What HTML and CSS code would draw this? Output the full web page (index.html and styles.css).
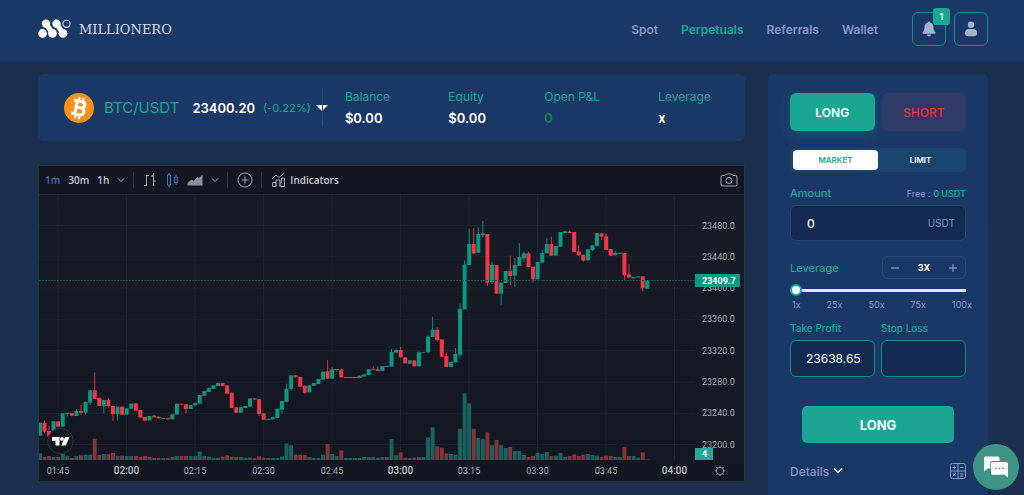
FILE: index.html
```html
<!DOCTYPE html>
<html lang="en">
<head>
<meta charset="utf-8">
<meta name="viewport" content="width=device-width, initial-scale=1">
<title>Millionero</title>
<link rel="stylesheet" href="styles.css">
</head>
<body>
<header class="header">
  <a class="brand" href="#">
    <svg class="brand-mark" viewBox="0 0 33 20" aria-hidden="true">
      <g fill="#fff"><circle cx="4.500" cy="14.500" r="4.400"/><circle cx="8" cy="4.800" r="4.200"/><circle cx="14.500" cy="14.300" r="4.400"/><circle cx="18.500" cy="4.800" r="4.200"/><circle cx="25" cy="14.300" r="4.400"/></g>
      <path d="M8.500 5.500l5.500 8M19 5.500l5.500 8" stroke="#fff" stroke-width="5"/>
      <circle cx="28.500" cy="4.800" r="3.600" fill="none" stroke="#c9d6e8" stroke-width="1.100"/>
    </svg>
    <span>MILLIONERO</span>
  </a>
  <nav class="nav">
    <a href="#">Spot</a><a class="current" href="#">Perpetuals</a><a href="#">Referrals</a><a href="#">Wallet</a>
  </nav>
  <div class="header-actions">
    <button class="icon-button" aria-label="Notifications">
      <svg viewBox="0 0 14 16" width="14" height="16"><path d="M7 .5c-.8 0-1.100.5-1.100 1.100C3.500 2.200 2.600 4 2.600 6c0 3-.8 4.200-1.900 5.200-.6.700-.2 1.500.6 1.500h11.400c.8 0 1.200-.8.6-1.500C12.200 10.200 11.400 9 11.400 6c0-2-.9-3.800-3.300-4.400C8.100 1 7.800.5 7 .5zM5 13.500a2 2 0 0 0 4 0z" fill="#a3b3cf"/></svg>
      <span class="badge">1</span>
    </button>
    <button class="icon-button" aria-label="Account">
      <svg viewBox="0 0 14 16" width="14" height="16"><circle cx="7" cy="3.800" r="3.200" fill="#a3b3cf"/><path d="M4.500 8h5c2 0 3.500 1.600 3.500 4 0 2.200-1 3.300-3 3.300H4c-2 0-3-1.100-3-3.300 0-2.400 1.500-4 3.500-4z" fill="#a3b3cf"/></svg>
    </button>
  </div>
</header>

<main class="main">
  <section class="market">
    <div class="ticker">
      <button class="pair">
        <svg class="coin" viewBox="0 0 30 30" aria-hidden="true">
          <circle cx="15" cy="15" r="15" fill="#f6921a"/>
          <g transform="rotate(13 15 15)" fill="none" stroke="#fff" stroke-width="3">
            <path d="M8.500 8.300H16.500c4.600 0 4.600 6.200 0 6.200h-4M16.500 14.500c5.600 0 5.600 7.200 0 7.200H8.500M12 8.300v13.400"/>
            <path d="M13.300 4.200v4M17.300 4.200v4M13.300 21.700v4M17.300 21.700v4" stroke-width="2.200"/>
          </g>
        </svg>
        <span class="pair-name">BTC/USDT</span>
        <span class="pair-price">23400.20</span>
        <span class="pair-change">(-0.22%)</span>
        <span class="pair-caret"></span>
      </button>
      <dl class="stats">
        <div><dt>Balance</dt><dd>$0.00</dd></div>
        <div><dt>Equity</dt><dd>$0.00</dd></div>
        <div><dt>Open P&amp;L</dt><dd class="flat">0</dd></div>
        <div><dt>Leverage</dt><dd>x</dd></div>
      </dl>
    </div>

    <div class="chart">
      <div class="toolbar">
        <div class="tools">
          <button class="tool-active">1m</button><button>30m</button><button>1h</button>
          <button aria-label="More intervals"><svg viewBox="0 0 8 8" width="8" height="8"><path d="M1 2.500l3 3 3-3"/></svg></button>
        </div>
        <div class="tools">
          <button aria-label="Bars"><svg viewBox="0 0 14 16" width="14" height="16"><path d="M3.500 3v11M1 13.500h2.500M3.500 3.500H6M10.500 1v13M8 4h2.500M10.500 9H13"/></svg></button>
          <button class="tool-active" aria-label="Candles"><svg viewBox="0 0 14 16" width="14" height="16"><path d="M2.500 3h3v10h-3zM4 1v2M4 13v2.500M9.500 5h3v5.500h-3zM11 2.500V5M11 10.500V13"/></svg></button>
          <button aria-label="Area"><svg viewBox="0 0 16 14" width="16" height="14"><path class="solid" d="M.5 12.500V10l4-3.500 2 1.500 4-4 1.500 1 3.500-3.500v11z"/></svg></button>
          <button aria-label="More styles"><svg viewBox="0 0 8 8" width="8" height="8"><path d="M1 2.500l3 3 3-3"/></svg></button>
        </div>
        <div class="tools">
          <button aria-label="Compare"><svg viewBox="0 0 16 16" width="16" height="16"><circle cx="8" cy="8" r="7"/><path d="M4.500 8h7M8 4.500v7"/></svg></button>
        </div>
        <div class="tools">
          <button class="indicators"><svg viewBox="0 0 15 16" width="15" height="16"><path d="M1 7l4-4 3 2.500L13.500 1M1.500 14.500v-4H5v4zM5 14.500V8h4v6.500M9 14.500v-4h1.500V6H13.500v8.500z"/></svg>Indicators</button>
        </div>
        <button class="camera" aria-label="Snapshot"><svg viewBox="0 0 18 14" width="18" height="14"><path d="M2.500 2.500H5L6.500 1h5L13 2.500h2.500a1.500 1.500 0 0 1 1.500 1.500v7.500a1.500 1.500 0 0 1-1.500 1.500h-13A1.500 1.500 0 0 1 1 11.500V4a1.500 1.500 0 0 1 1.500-1.500z"/><circle cx="9" cy="7.500" r="3"/></svg></button>
      </div>
      <svg class="plot" id="plot" viewBox="0 0 705 286" role="img" aria-label="BTC/USDT one minute candles"></svg>
    </div>
  </section>

  <form class="order" onsubmit="return false">
    <div class="sides">
      <button type="button" class="side side-long">LONG</button>
      <button type="button" class="side side-short">SHORT</button>
    </div>
    <div class="types">
      <button type="button" class="type-active">MARKET</button>
      <button type="button">LIMIT</button>
    </div>
    <div class="row amount-row"><label for="amount">Amount</label><span class="free">Free : <b>0 USDT</b></span></div>
    <div class="amount"><input id="amount" value="0"><span>USDT</span></div>
    <div class="row leverage-row">
      <label for="leverage">Leverage</label>
      <div class="stepper">
        <button type="button" aria-label="Less"><svg viewBox="0 0 10 10" width="10" height="10"><path d="M1 5h8"/></svg></button>
        <output>3X</output>
        <button type="button" aria-label="More"><svg viewBox="0 0 10 10" width="10" height="10"><path d="M1 5h8M5 1v8"/></svg></button>
      </div>
    </div>
    <input class="slider" id="leverage" type="range" min="1" max="100" value="1">
    <div class="marks"><span>1x</span><span>25x</span><span>50x</span><span>75x</span><span>100x</span></div>
    <div class="exits">
      <div><label for="profit">Take Profit</label><input id="profit" value="23638.65"></div>
      <div><label for="loss">Stop Loss</label><input id="loss"></div>
    </div>
    <button class="submit">LONG</button>
    <div class="row details-row">
      <button type="button" class="details">Details <svg viewBox="0 0 10 8" width="10" height="8"><path d="M1 1.500l4 4 4-4"/></svg></button>
      <button type="button" class="calculator" aria-label="Calculator"><svg viewBox="0 0 16 16" width="16" height="16"><rect x=".5" y=".5" width="15" height="15" rx="2"/><path d="M8 .5v15M.5 8h15M2.500 4.500h3.500M4.250 2.700v3.600M10 4.500h3.500M3 10.500l2.600 2.600M5.600 10.500L3 13.100M10 10.800h3.500M10 13h3.500"/></svg></button>
    </div>
  </form>
</main>

<button class="chat" aria-label="Chat">
  <svg viewBox="0 0 26 22" width="26" height="22"><path d="M2.500.5h12.200c1 0 1.800.8 1.800 1.800V5H9.300C8 5 7.200 6 7.200 7.200v5.300H4.500L1 15.500V2.300C1 1.300 1.500.5 2.500.5z" fill="#fff"/><path d="M9.800 6h13.400c1 0 1.800.8 1.800 1.800v13.700l-3.500-2.700H9.800c-1 0-1.800-.8-1.800-1.800V7.800C8 6.800 8.800 6 9.800 6z" fill="#fff"/><g fill="#3e9586"><circle cx="13" cy="12.300" r=".9"/><circle cx="16.500" cy="12.300" r=".9"/><circle cx="20" cy="12.300" r=".9"/></g></svg>
</button>
<script src="chart.js"></script>
</body>
</html>
```

FILE: styles.css
```css
* { box-sizing: border-box; }

body {
  margin: 0;
  min-height: 100vh;
  display: flex;
  flex-direction: column;
  background: linear-gradient(#1b2f4c, #1b3050);
  color: #fff;
  font-family: Inter, "Open Sans", sans-serif;
  font-size: 11px;
}

button, input { font: inherit; color: inherit; }
button { border: 0; padding: 0; background: none; cursor: pointer; }
svg { display: block; }
a { text-decoration: none; }

.header {
  display: flex;
  align-items: center;
  height: 62px;
  padding: 0 36px 4px 38px;
  background: #1a3866;
}
.brand {
  display: flex;
  align-items: center;
  gap: 8px;
  margin-right: auto;
  color: #d5dfec;
  font-family: "DejaVu Serif", serif;
  font-size: 13px;
}
.brand-mark { width: 33px; height: 20px; }
.nav { display: flex; gap: 23px; font-size: 12px; font-weight: 600; }
.nav a { color: #8399c2; }
.nav .current { color: #1ba593; }
.header-actions { display: flex; gap: 8px; margin-left: 34px; }
.icon-button {
  position: relative;
  display: grid;
  place-items: center;
  width: 34px;
  height: 34px;
  border: 1px solid #178985;
  border-radius: 6px;
}
.badge {
  position: absolute;
  top: -5px;
  right: -5px;
  width: 17px;
  height: 17px;
  border-radius: 3px;
  background: #1ba593;
  font-size: 9px;
  font-weight: 600;
  line-height: 17px;
}

.main {
  flex: 1;
  display: grid;
  grid-template-columns: minmax(0, 1fr) 220px;
  gap: 23px;
  padding: 12px 36px 0 38px;
}
.market { display: flex; flex-direction: column; gap: 24px; }

.ticker {
  display: flex;
  align-items: center;
  height: 67px;
  padding: 0 34px 0 26px;
  border-radius: 6px;
  background: #1a3866;
}
.pair { display: flex; align-items: center; }
.coin { width: 30px; height: 30px; }
.pair-name { margin-left: 10px; color: #1ba593; font-size: 15px; }
.pair-price { margin-left: 13px; font-size: 13px; font-weight: 600; }
.pair-change { margin-left: 8px; color: #1a9b8d; font-size: 11px; font-weight: 500; }
.pair-caret {
  margin-left: 5px;
  border: 6px solid transparent;
  border-top-color: #fff;
  border-bottom: 0;
}
.stats {
  flex: 1;
  display: flex;
  justify-content: space-between;
  margin: 0 0 0 -6px;
  padding-left: 22px;
  border-left: 1px solid #2c4b7a;
}
.stats dt { color: #1ba593; font-size: 12px; line-height: 17px; }
.stats dd { margin: 5px 0 0; font-size: 13px; font-weight: 600; line-height: 17px; }
.stats .flat { color: #0b8058; }

.chart { border: 1px solid #2a3140; background: linear-gradient(#181c27, #131722); }
.toolbar {
  display: flex;
  align-items: center;
  height: 29px;
  padding: 0 6px;
  border-bottom: 1px solid #252a35;
  background: #131722;
  color: #c5c8d1;
  font-family: "Open Sans", "Noto Sans", sans-serif;
  font-size: 10px;
  font-weight: 600;
}
.toolbar svg { fill: none; stroke: #a4a8b4; stroke-width: 1; }
.toolbar .solid { fill: #8b8f9a; stroke: none; }
.tools { display: flex; align-items: center; gap: 8px; padding-right: 8px; }
.tools + .tools { padding-left: 9px; border-left: 1px solid #343844; height: 16px; }
.toolbar .tool-active { color: #416cad; }
.toolbar .tool-active svg { stroke: #3a72c8; }
.indicators { display: flex; align-items: center; gap: 4px; }
.camera { margin-left: auto; }
.plot { width: 100%; height: auto; font-family: Roboto, sans-serif; font-size: 9px; }
.grid { stroke: #20242f; }
.axis-label { fill: #a5a8b1; }
.axis-major { fill: #bfc1c8; font-size: 10px; font-weight: 500; }
.up { fill: #089981; stroke: #089981; }
.down { fill: #f23645; stroke: #f23645; }
.volume-up { fill: #1a625d; }
.volume-down { fill: #85333b; }
.last-line { stroke: #135750; stroke-dasharray: 2 1; }
.tag { fill: #089981; }
.volume-tag { fill: #24a69a; }
.tag-text { fill: #fff; font-weight: 700; }
.watermark { fill: #131722; stroke: #303440; }
.watermark-shape { fill: #fff; }
.gear { fill: none; stroke: #8d9099; }

.order {
  display: flex;
  flex-direction: column;
  padding: 19px 22px 14px;
  border-radius: 6px 6px 0 0;
  background: #1a3866;
}
.sides { display: grid; grid-template-columns: 1fr 1fr; gap: 7px; }
.side { height: 38px; border-radius: 6px; font-size: 12px; font-weight: 600; }
.side-long { background: #1ba593; box-shadow: 0 4px 12px #1ba59340; }
.side-short { background: #303a66; color: #d43b41; font-weight: 500; }
.types {
  display: grid;
  grid-template-columns: 1fr 1fr;
  margin-top: 17px;
  padding: 2px 3px;
  border-radius: 6px;
  background: #1a456c;
  font-size: 8px;
  font-weight: 600;
}
.types button { height: 20px; border-radius: 4px; }
.types .type-active { background: #fff; color: #1ba593; }
.row { display: flex; align-items: center; justify-content: space-between; }
.row label { color: #1ba593; font-size: 11px; font-weight: 500; }
.amount-row { height: 18px; margin-top: 12px; }
.free { color: #8399c2; font-size: 9px; }
.free b { color: #1ba593; font-weight: 600; }
.amount {
  display: flex;
  align-items: center;
  height: 36px;
  margin-top: 3px;
  padding: 0 10px 0 16px;
  border: 1px solid #28456f;
  border-radius: 6px;
  background: #132b50;
  color: #7d93bd;
  font-size: 10px;
}
.amount input {
  flex: 1;
  min-width: 0;
  padding: 0;
  border: 0;
  background: none;
  color: #fff;
  font-size: 12px;
  font-weight: 500;
}
.leverage-row { margin-top: 15px; }
.stepper {
  display: flex;
  align-items: center;
  justify-content: space-between;
  width: 84px;
  height: 23px;
  padding: 0 7px;
  border: 1px solid #2d4a78;
  border-radius: 6px;
  font-size: 9px;
  font-weight: 700;
}
.stepper svg { stroke: #9cadce; stroke-width: 1; }
.slider {
  appearance: none;
  width: 100%;
  height: 12px;
  margin: 5px 0 0;
  background: linear-gradient(#dfe5ef, #dfe5ef) center / 100% 3px no-repeat;
}
.slider::-webkit-slider-thumb {
  appearance: none;
  width: 12px;
  height: 12px;
  border: 2px solid #1ba593;
  border-radius: 50%;
  background: #fff;
}
.marks {
  display: flex;
  justify-content: space-between;
  margin: 3px -6px 0 2px;
  color: #8399c2;
  font-size: 9px;
  line-height: 12px;
}
.exits { display: grid; grid-template-columns: 1fr 1fr; gap: 6px; margin-top: 9px; }
.exits label { display: block; color: #1ba593; font-size: 10px; font-weight: 500; line-height: 16px; }
.exits input {
  width: 100%;
  height: 37px;
  margin-top: 4px;
  padding: 0 8px 0 15px;
  border: 1px solid #178985;
  border-radius: 6px;
  background: #132b50;
  font-size: 12px;
}
.submit {
  height: 37px;
  margin: 29px 12px 0;
  border-radius: 5px;
  background: #1ba593;
  font-size: 13px;
  font-weight: 700;
}
.details-row { margin-top: 20px; }
.details { display: flex; align-items: center; gap: 4px; color: #8399c2; font-size: 12px; font-weight: 500; }
.details svg { fill: none; stroke: #fff; stroke-width: 1.5; }
.calculator svg { fill: none; stroke: #8399c2; }
.chat {
  position: fixed;
  right: 5px;
  bottom: 5px;
  display: grid;
  place-items: center;
  width: 46px;
  height: 46px;
  border-radius: 50%;
  background: #3e9586;
}
```

FILE: chart.js
```js
// Each candle: direction, high, body top, body bottom, low, volume top.
// Units are thirds of a plot unit, counted from the segment's offset.
const segments = [
  { offset: 435, candles: `
U 248 248 287 287 340|D 242 248 275 280 351|D 257 273 290 296 348|U 244 244 290 290 351|D 244 244 260 260 351
U 220 220 260 260 342|U 219 219 222 230 348|D 219 219 227 229 354|U 208 213 228 228 348|D 195 213 218 224 346
U 184 186 218 224 344|U 151 151 188 195 344|D 97 151 177 177 296|D 172 174 198 198 345|U 180 180 198 220 342
D 175 180 198 203 343|D 198 198 222 243 339|U 200 200 222 242 348|D 200 200 224 224 347|U 205 205 224 224 348
U 191 191 206 206 348|D 190 190 212 212 348|D 210 210 233 233 351|D 231 231 242 242 348|U 228 228 241 241 351
D 225 227 232 232 354|D 230 230 235 235 354|U 234 234 237 237 354|D 234 234 238 238 354|U 223 223 238 238 351
U 191 191 224 224 348|D 191 191 194 194 348|D 193 193 207 220 348|U 195 195 207 207 348|U 189 189 196 196 348
U 165 165 191 191 335|U 153 153 167 167 348|U 142 145 156 156 350|U 136 136 147 147 353|U 129 129 138 138 353
D 129 129 138 138 350|D 136 136 161 161 346|D 158 158 204 204 350|D 202 202 218 218 351|U 202 202 218 218 351
U 198 198 204 204 353|U 175 175 200 200 353|D 175 175 179 179 354|D 178 178 222 227 349|D 220 220 239 239 353
U 237 237 240 240 354|U 230 232 238 238 354|U 206 206 234 234 354|U 183 183 209 222 349|U 131 146 186 186 310
U 106 106 147 152 316|D 106 106 112 112 344|D 111 111 140 140 344|D 137 137 158 162 345|U 136 136 157 157 351
U 129 129 137 137 354|U 117 117 132 132 354|U 95 95 119 119 344|D 60 94 116 116 312|U 80 88 116 116 342
U 87 87 90 94 348|D 88 88 112 112 331|U 111 111 114 114 354|U 111 111 114 114 354|U 111 111 114 114 354
U 107 107 114 114 354|U 103 103 109 109 351|U 88 88 105 105 351|U 79 87 90 90 351|D 79 88 93 93 353
U 79 79 93 93 351|U 78 78 81 81 351|U 26 36 80 80 297|U 26 30 38 38 346|D 21 30 52 52 337
D 52 52 70 70 353|U 61 61 71 71 354|D 61 61 79 79 353|U 34 37 79 79 351|U 36 36 38 38 351` },
  { offset: 45, candles: `
U 374 380 427 427 682|U 320 359 381 381 652|D 352 359 390 394 709|D 388 388 440 440 713|D 427 438 471 471 730
U 456 456 471 471 732|U 414 432 457 457 734|U 280 296 434 445 656|U 151 164 298 298 550|U 57 102 165 165 580
D 54 102 130 133 656|U 52 72 128 128 684|U 33 71 75 82 688|D 72 72 218 228 667|U 156 165 217 222 706
D 165 165 251 251 690|U 218 218 251 286 706|U 183 183 219 219 714|D 137 183 198 225 711|U 144 165 197 230 723
U 100 141 168 168 723|U 125 130 145 156 735|D 125 130 171 171 741|D 170 170 208 217 738|U 156 156 208 208 729
U 120 129 158 158 732|U 84 102 130 130 726|D 80 102 137 137 738|U 108 108 137 137 737|U 66 66 110 110 729
U 62 64 69 69 741|D 62 65 69 69 738|D 66 66 126 126 733|D 106 124 136 136 738|D 134 134 152 155 734
U 118 118 151 151 732|U 106 106 120 123 735|U 69 69 108 108 737|D 68 70 80 90 741|D 70 79 119 119 737
D 117 117 137 137 738|U 122 129 136 136 741|U 128 128 131 131 741|D 129 129 196 213 711|D 162 193 203 203 738
U 201 201 205 205 738|U 199 199 202 202 743|D 199 199 235 244 727|U 210 210 236 236 748` }
];

const NS = 'http://www.w3.org/2000/svg';
const plot = document.getElementById('plot');
const PLOT_WIDTH = 656;
const BASE = 265;
const STEP = 137 / 30;

function add(name, attrs, text) {
  const node = document.createElementNS(NS, name);
  for (const key in attrs) node.setAttribute(key, attrs[key]);
  if (text) node.textContent = text;
  plot.appendChild(node);
}

const times = ['01:45', '02:00', '02:15', '02:30', '02:45', '03:00', '03:15', '03:30', '03:45', '04:00'];
times.forEach((time, i) => {
  const x = 19 + 68.5 * i;
  add('line', { class: 'grid', x1: x, x2: x, y1: 0, y2: BASE });
  add('text', { class: time.endsWith(':00') ? 'axis-major' : 'axis-label', x, y: 279, 'text-anchor': 'middle' }, time);
});
for (let i = 0; i < 8; i++) {
  const y = 30.5 + 31.3 * i;
  add('line', { class: 'grid', x1: 0, x2: PLOT_WIDTH, y1: y, y2: y });
  add('text', { class: 'axis-label', x: 663, y: y + 3 }, (23480 - 40 * i) + '.0');
}

let index = 0;
for (const { offset, candles } of segments) {
  for (const row of candles.trim().split(/[|\n]/)) {
    const [dir, ...raw] = row.split(' ');
    const [high, top, bottom, low, volume] = raw.map(v => (Number(v) + offset) / 3);
    const x = 0.9 + STEP * index++;
    const up = dir === 'U';
    add('rect', { class: up ? 'volume-up' : 'volume-down', x: x - 2, y: volume, width: 4, height: BASE - volume });
    add('line', { class: up ? 'up' : 'down', x1: x, x2: x, y1: high, y2: low, 'stroke-width': 0.9 });
    add('rect', { class: up ? 'up' : 'down', x: x - 2, y: top, width: 4, height: bottom - top, 'stroke-width': 0 });
  }
}

add('line', { class: 'last-line', x1: 0, x2: PLOT_WIDTH, y1: 85.5, y2: 85.5 });
add('rect', { class: 'tag', x: PLOT_WIDTH, y: 79, width: 45, height: 13 });
add('text', { class: 'tag-text', x: 663, y: 89 }, '23409.7');
add('rect', { class: 'volume-tag', x: PLOT_WIDTH, y: 253, width: 18, height: 12 });
add('text', { class: 'tag-text', x: 663, y: 262 }, '4');

add('circle', { class: 'watermark', cx: 21.5, cy: 246, r: 12.7 });
add('path', { class: 'watermark-shape', d: 'M13 242h7.500v8.500h-4v-4.800H13zM26 242h4.500l-3.700 8.500h-4.400z' });
add('circle', { class: 'watermark-shape', cx: 23, cy: 243.9, r: 1.9 });
add('circle', { class: 'gear', cx: 681, cy: 276, r: 3.6 });
for (let a = 0; a < 360; a += 45) {
  add('path', { class: 'gear', d: 'M681 272.400v-1.600', transform: `rotate(${a} 681 276)` });
}
```
